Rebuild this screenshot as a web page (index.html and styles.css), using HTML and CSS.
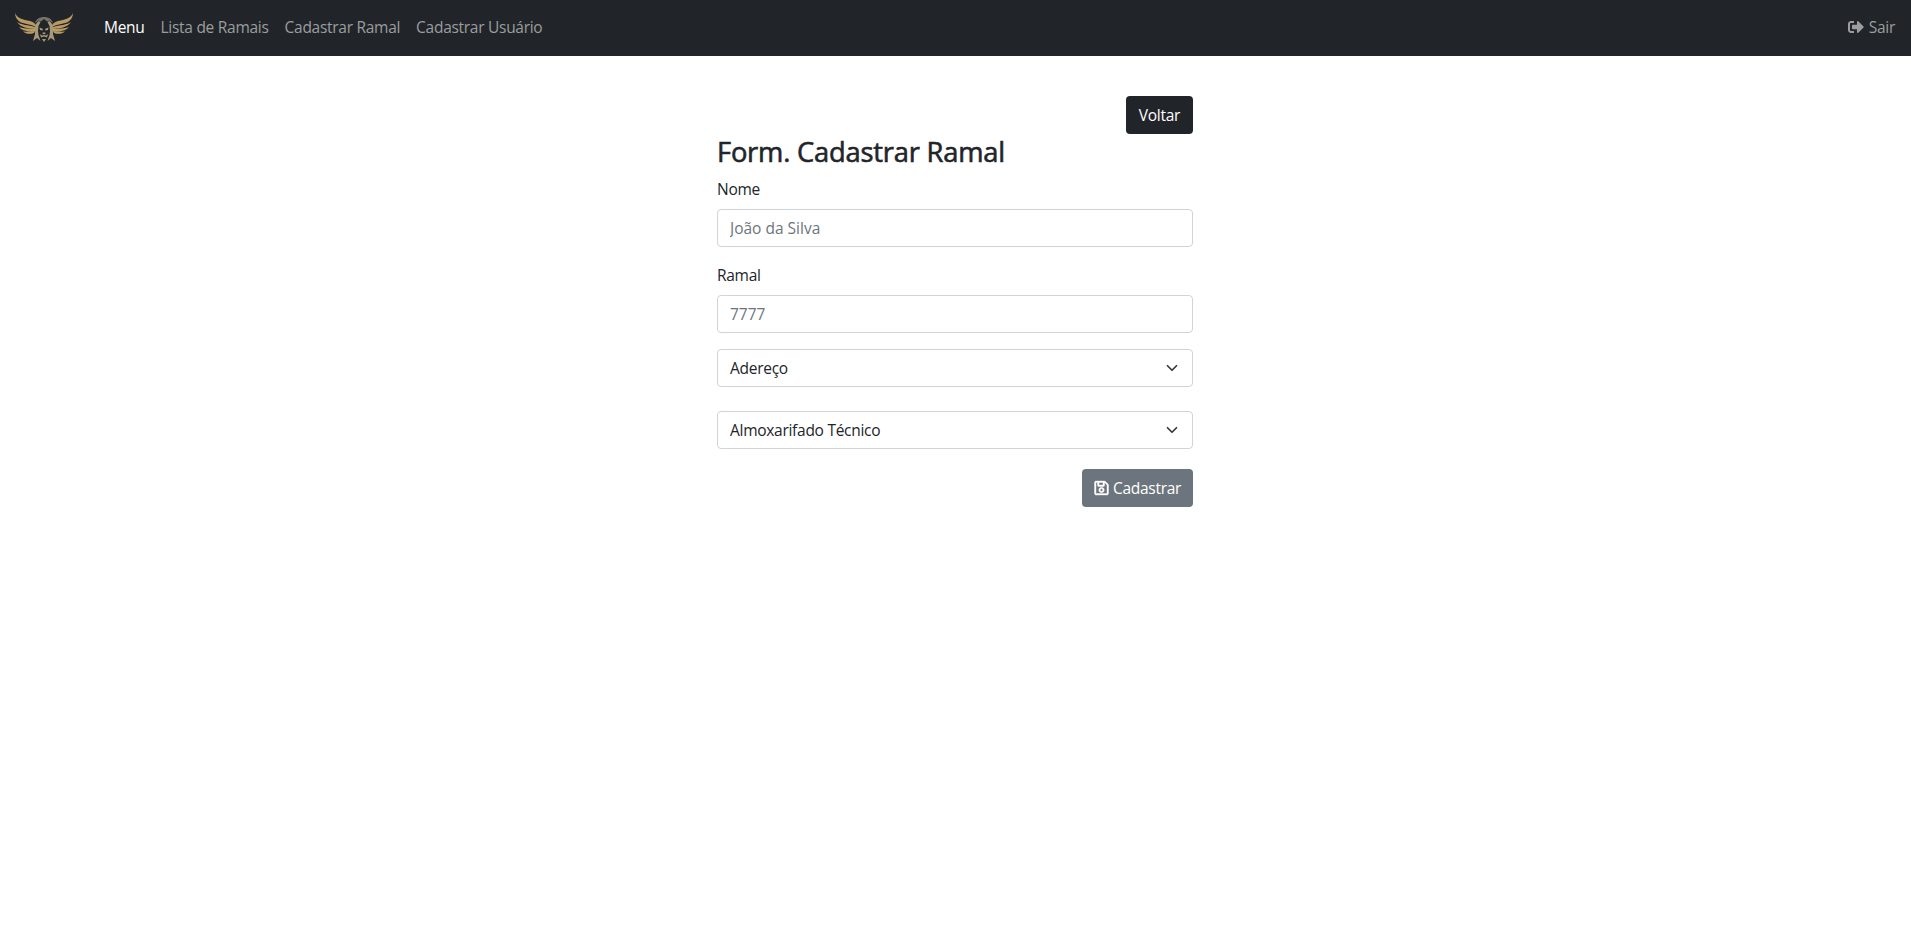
FILE: index.html
```html
<!DOCTYPE html>
<html lang="pt-BR">
<head>
<meta charset="utf-8">
<title>Cadastrar Ramal</title>
<link rel="stylesheet" href="styles.css">
</head>
<body>
<nav class="navbar">
  <a class="brand" href="#" aria-label="Início">
    <svg class="logo" viewBox="0 0 60 30">
      <g id="wing" class="wing">
        <path d="M1 0C3 5 9 7 16 8C20 9 22 11 22 14C17 11 11 11 6 9C3 7 1 4 1 0Z"/>
        <path d="M3 9C7 12 14 12 21 14L21 16C14 15 7 15 3 9Z"/>
        <path d="M5 14C9 16 15 15 21 16L21 18C14 19 8 18 5 14Z"/>
        <path d="M9 18.500C13 19 17 18 21 18L20 20C16 21.500 12 21 9 18.500Z"/>
      </g>
      <use href="#wing" transform="translate(60 0) scale(-1 1)"/>
      <path class="crown" d="M21 10C22 6 26 4 30 4C34 4 38 6 39 10L35.500 7.500L33 8.500L30 6L27 8.500L24.500 7.500Z"/>
      <g class="mane">
        <path d="M24.500 8L26.500 9L24.500 13L24 18L24.500 22L26.500 28L23 25L19 28L21 21L21 12Z"/>
        <path d="M35.500 8L33.500 9L35.500 13L36 18L35.500 22L33.500 28L37 25L41 28L39 21L39 12Z"/>
        <path d="M25.500 14.500L29 16L28.500 17.500L26 17Z"/>
        <path d="M34.500 14.500L31 16L31.500 17.500L34 17Z"/>
        <path d="M28 20L30 19.300L32 20L30 21.500Z"/>
        <path d="M26 21L28 22.500L30 22L32 22.500L34 21L33 24.500L30 23.500L27 24.500Z"/>
        <path d="M28 26H32L30 29Z"/>
      </g>
    </svg>
  </a>
  <div class="links">
    <a class="link active" href="#">Menu</a>
    <a class="link" href="#">Lista de Ramais</a>
    <a class="link" href="#">Cadastrar Ramal</a>
    <a class="link" href="#">Cadastrar Usuário</a>
  </div>
  <a class="link logout" href="#">
    <svg class="icon" viewBox="0 0 512 512"><path d="M497 273L329 441c-15 15-41 4.500-41-17v-96H152c-13.300 0-24-10.700-24-24v-96c0-13.300 10.700-24 24-24h136V88c0-21.400 25.900-32 41-17l168 168c9.300 9.400 9.300 24.600 0 34zM192 436v-40c0-6.600-5.400-12-12-12H96c-17.700 0-32-14.300-32-32V160c0-17.700 14.300-32 32-32h84c6.600 0 12-5.400 12-12V76c0-6.600-5.400-12-12-12H96c-53 0-96 43-96 96v192c0 53 43 96 96 96h84c6.600 0 12-5.400 12-12z"/></svg>
    <span>Sair</span>
  </a>
</nav>
<main class="panel">
  <a class="btn btn-dark" href="#">Voltar</a>
  <h3 class="title">Form. Cadastrar Ramal</h3>
  <form class="form">
    <label class="label" for="nome">Nome</label>
    <input class="control" id="nome" type="text" placeholder="João da Silva">
    <label class="label" for="ramal">Ramal</label>
    <input class="control" id="ramal" type="text" placeholder="7777">
    <div class="select-wrap">
      <select class="control select" aria-label="Setor"><option>Adereço</option></select>
      <svg class="caret" viewBox="0 0 16 16"><path d="M2 5l6 6 6-6"/></svg>
    </div>
    <div class="select-wrap">
      <select class="control select" aria-label="Departamento"><option>Almoxarifado Técnico</option></select>
      <svg class="caret" viewBox="0 0 16 16"><path d="M2 5l6 6 6-6"/></svg>
    </div>
    <button class="btn btn-secondary" type="button">
      <svg class="icon save" viewBox="0 0 448 512"><path d="M433.941 129.941l-83.882-83.882A48 48 0 0 0 316.118 32H48C21.490 32 0 53.490 0 80v352c0 26.510 21.490 48 48 48h352c26.510 0 48-21.490 48-48V163.882a48 48 0 0 0-14.059-33.941zM272 80v80H144V80h128zm122 352H54a6 6 0 0 1-6-6V86a6 6 0 0 1 6-6h42v104c0 13.255 10.745 24 24 24h176c13.255 0 24-10.745 24-24V83.882l78.243 78.243a6 6 0 0 1 1.757 4.243V426a6 6 0 0 1-6 6zM224 232c-48.523 0-88 39.477-88 88s39.477 88 88 88 88-39.477 88-88-39.477-88-88-88zm0 128c-22.056 0-40-17.944-40-40s17.944-40 40-40 40 17.944 40 40-17.944 40-40 40z"/></svg>
      <span>Cadastrar</span>
    </button>
  </form>
</main>
</body>
</html>
```

FILE: styles.css
```css
* {
  box-sizing: border-box;
}

body {
  margin: 0;
  background: #fff;
  color: #212529;
  font-family: "Open Sans", "Noto Sans", sans-serif;
  font-size: 15.5px;
  letter-spacing: -0.28px;
  line-height: 24px;
}

.navbar {
  display: flex;
  align-items: center;
  height: 56px;
  padding: 0 16px 2px 14px;
  background: #212529;
}

.brand {
  display: flex;
  width: 82px;
  padding-top: 2px;
}

.logo {
  width: 60px;
  height: 30px;
}

.wing {
  fill: #b99a62;
}

.crown {
  fill: #777369;
}

.mane {
  fill: #a89878;
}

.links {
  display: flex;
  flex: 1;
}

.link {
  padding: 0 8px;
  color: #9b9d9f;
  text-decoration: none;
  white-space: nowrap;
}

.link.active {
  color: #fff;
}

.logout {
  display: flex;
  align-items: center;
  gap: 5px;
  padding: 0;
}

.icon {
  width: 16px;
  height: 16px;
  fill: currentColor;
}

.icon.save {
  width: 15px;
  stroke: currentColor;
  stroke-width: 12;
}

.panel {
  display: flex;
  flex-direction: column;
  width: 476px;
  margin: 40px 0 0 717px;
}

.btn {
  display: flex;
  align-items: center;
  justify-content: center;
  align-self: flex-end;
  gap: 4px;
  height: 38px;
  padding: 0;
  border: 0;
  border-radius: 4px;
  color: #fff;
  font: inherit;
  letter-spacing: inherit;
  text-decoration: none;
}

.btn-dark {
  width: 67px;
  background: #212529;
}

.btn-secondary {
  width: 111px;
  margin-top: 4px;
  background: #6c757d;
}

.title {
  margin: 0 0 8px;
  font-size: 27.3px;
  font-weight: 400;
  letter-spacing: -0.2px;
  line-height: 35px;
  white-space: nowrap;
  -webkit-text-stroke: 0.6px currentColor;
}

.form {
  display: flex;
  flex-direction: column;
}

.label {
  margin-bottom: 8px;
}

.control {
  width: 100%;
  height: 38px;
  margin: 0 0 16px;
  padding: 0 12px;
  border: 1px solid #ced4da;
  border-radius: 4px;
  background: #fff;
  color: #212529;
  font: inherit;
  letter-spacing: inherit;
  appearance: none;
}

.control::placeholder {
  color: #6c757d;
  letter-spacing: 0;
  opacity: 1;
}

.select-wrap {
  display: grid;
  align-items: center;
  margin-bottom: 24px;
}

.select-wrap + .select-wrap {
  margin-bottom: 16px;
}

.select,
.caret {
  grid-area: 1 / 1;
}

.select {
  margin: 0;
}

.caret {
  justify-self: end;
  width: 16px;
  height: 12px;
  margin-right: 13px;
  fill: none;
  stroke: #343a40;
  stroke-width: 2.3;
  stroke-linecap: round;
  stroke-linejoin: round;
  pointer-events: none;
}
```
